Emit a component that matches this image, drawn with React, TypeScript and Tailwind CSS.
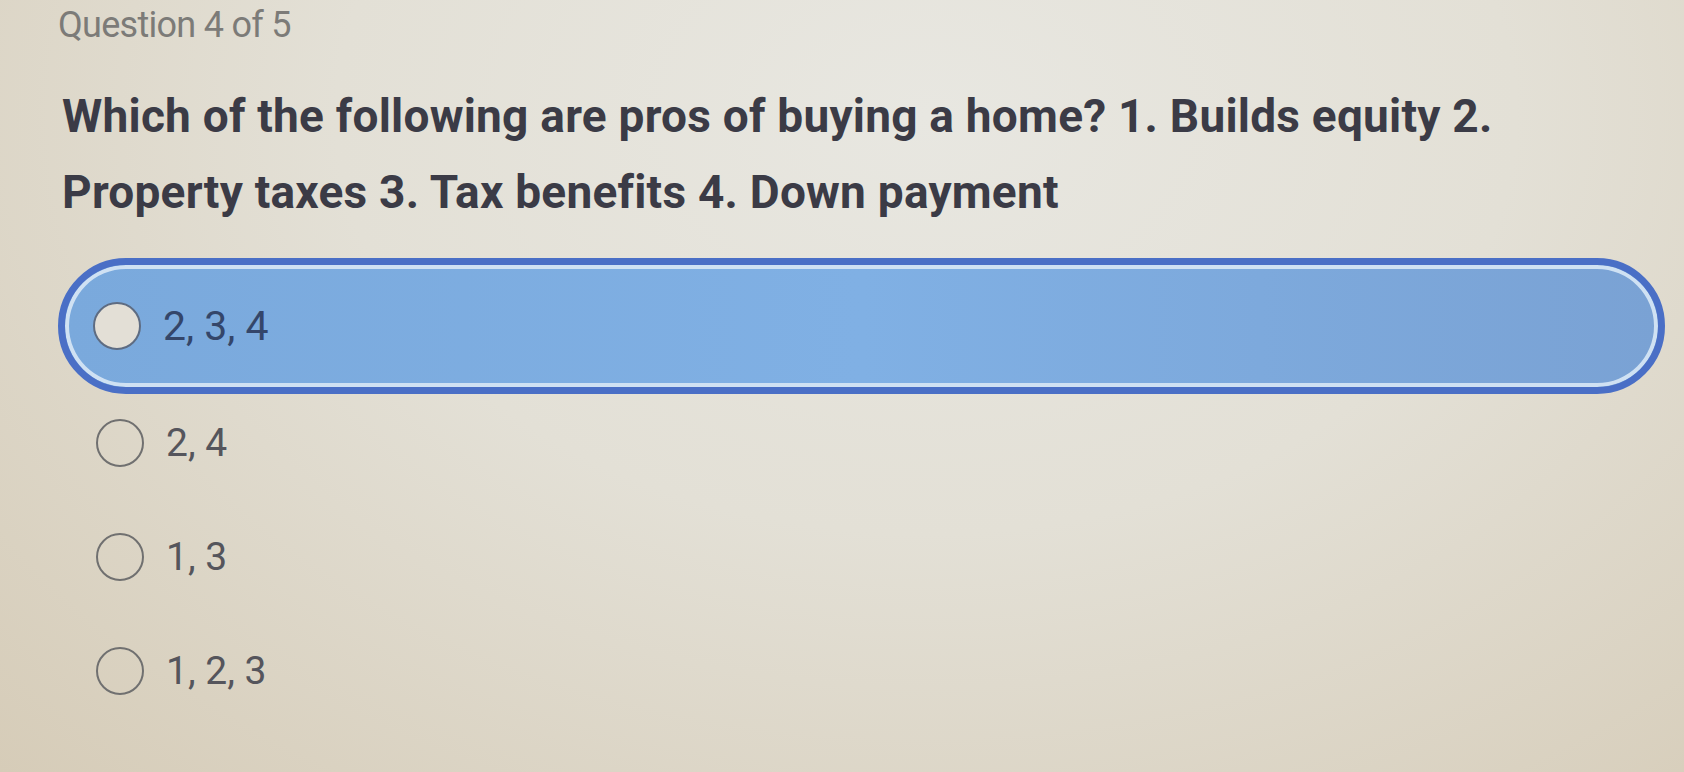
import React from 'react';

const options = [
  { id: 'a', label: '2, 3, 4' },
  { id: 'b', label: '2, 4' },
  { id: 'c', label: '1, 3' },
  { id: 'd', label: '1, 2, 3' },
];

function Radio({ selected }: { selected: boolean }) {
  return (
    <span
      className={`block w-[48px] h-[48px] shrink-0 rounded-full border-2 ${
        selected ? 'border-[#5e6c82] bg-[#e3dfd6]' : 'border-[#707070] bg-transparent'
      }`}
    />
  );
}

export default function App() {
  const selectedId = 'a';

  return (
    <div
      className="w-full h-[772px] overflow-hidden pl-[58px] pr-[19px] pt-[7px] bg-[radial-gradient(ellipse_at_55%_15%,#e8e7e1_0%,#e3e0d6_45%,#d6ccb8_100%)]"
      style={{ fontFamily: 'Roboto, "Liberation Sans", sans-serif' }}
    >
      <p className="text-[36px] leading-[36px] tracking-[-0.02em] text-[#7c7b78]">Question 4 of 5</p>

      <h1 className="mt-[35px] pl-[4px] text-[46px] leading-[76px] font-bold tracking-[0.005em] text-[#3b3b46]">
        Which of the following are pros of buying a home? 1. Builds equity 2.
        <br />
        Property taxes 3. Tax benefits 4. Down payment
      </h1>

      <div className="mt-[28px] flex flex-col">
        {options.map((opt, i) => {
          const selected = opt.id === selectedId;
          if (selected) {
            return (
              <div
                key={opt.id}
                className="h-[136px] rounded-full border-[7px] border-[#4a6fc6] bg-[linear-gradient(90deg,#7aa9dc_0%,#80b0e4_50%,#7aa2d4_100%)] shadow-[inset_0_0_0_4px_#cfe1f3] flex items-center gap-[22px] pl-[28px]"
              >
                <Radio selected />
                <span className="text-[41px] leading-none text-[#34466a]">{opt.label}</span>
              </div>
            );
          }
          return (
            <div
              key={opt.id}
              className={`h-[50px] flex items-center gap-[22px] pl-[38px] ${i === 1 ? 'mt-[24px]' : 'mt-[64px]'}`}
            >
              <Radio selected={false} />
              <span className="text-[39px] leading-none text-[#55555c]">{opt.label}</span>
            </div>
          );
        })}
      </div>
    </div>
  );
}
